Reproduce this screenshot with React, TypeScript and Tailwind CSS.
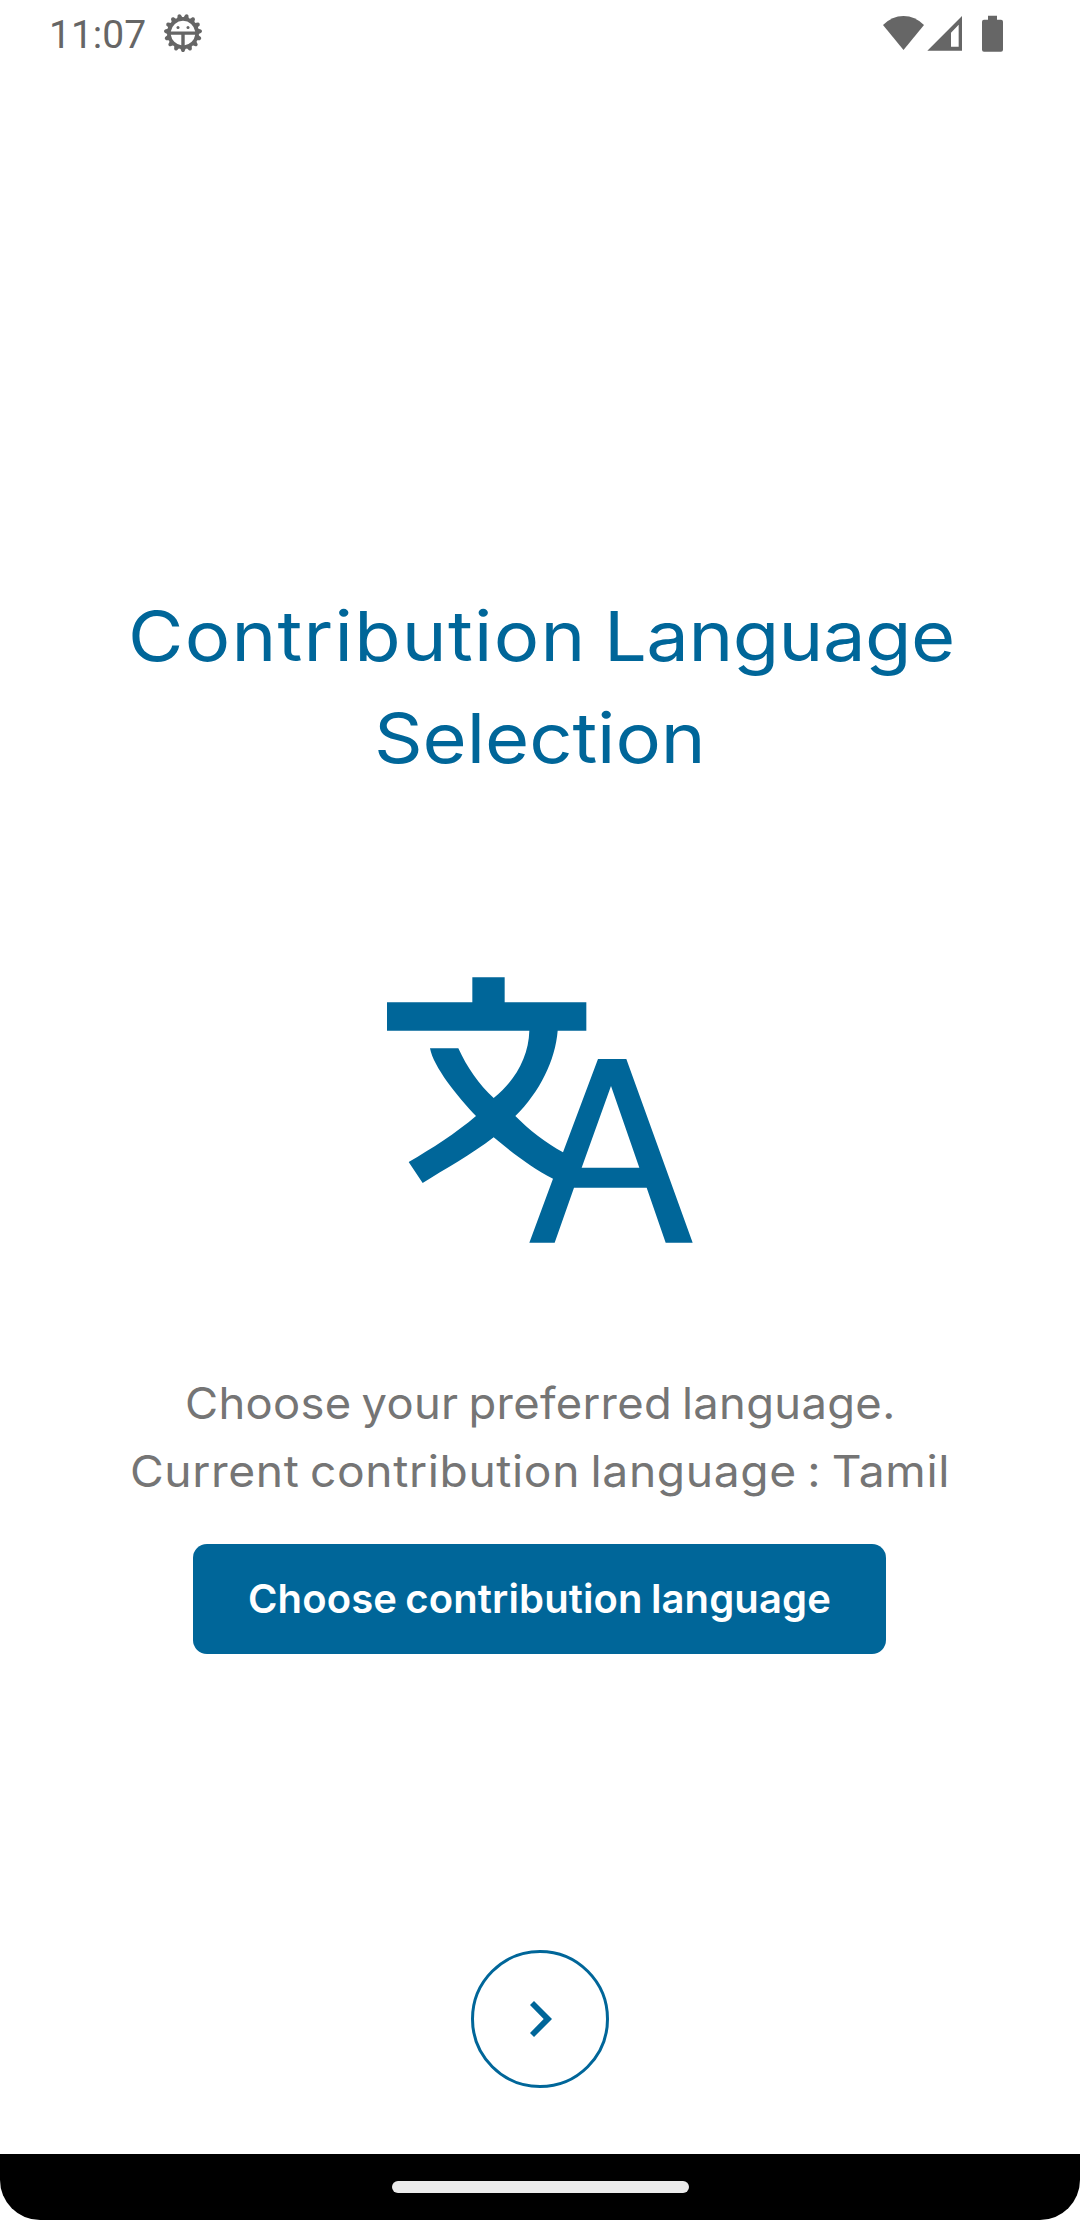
import type { ReactNode } from "react";

const TEETH = Array.from({ length: 15 }, (_, i) => i * 24);

function DebugIcon() {
  return (
    <svg className="h-10 w-10 text-[#666666]" viewBox="-20 -20 40 40" fill="currentColor">
      {TEETH.map((angle) => (
        <path key={angle} transform={`rotate(${angle})`} d="M-3.2 14 L-1.6 18.2 Q0 20 1.6 18.2 L3.2 14 Z" />
      ))}
      <path
        fillRule="evenodd"
        d="M0 -16 A16 16 0 1 1 0 16 A16 16 0 1 1 0 -16 Z M-12.2 -1.4 H12.2 A12.3 12.3 0 0 0 -12.2 -1.4 Z M-12.2 1.8 A12.3 12.3 0 0 0 -1.7 12.2 V1.8 Z M12.2 1.8 A12.3 12.3 0 0 1 1.7 12.2 V1.8 Z"
      />
      <circle cx="-5" cy="-5.6" r="1.5" />
      <circle cx="5" cy="-5.6" r="1.5" />
    </svg>
  );
}

function StatusBar() {
  return (
    <header className="flex h-[69px] shrink-0 items-center pl-[49px] pr-[77px] font-['Roboto',sans-serif] text-[39px] text-[#666666]">
      <span className="pt-px leading-[69px]">11:07</span>
      <div className="-mt-[3px] ml-[17px]">
        <DebugIcon />
      </div>
      <div className="-mt-[3px] ml-auto flex items-start">
        <svg className="mr-[3px] h-[37px] w-[41px]" viewBox="69 43 123 111" fill="currentColor">
          <path d="M69 73 Q96 46 130.500 46 Q165 46 192 73 L130.500 148 Z" />
        </svg>
        <svg className="mr-5 h-[37px] w-[35px]" viewBox="201 43 105 111" fill="currentColor">
          <path fillRule="evenodd" d="M202 150 L306 46 V150 Z M273 96 V138 H296 V72 Z" />
        </svg>
        <svg className="h-[37px] w-[21px]" viewBox="366 43 63 111" fill="currentColor">
          <path d="M384 45 H411 V57 H423 Q429 57 429 63 V147 Q429 153 423 153 H372 Q366 153 366 147 V63 Q366 57 372 57 H384 Z" />
        </svg>
      </div>
    </header>
  );
}

function TranslateIcon() {
  return (
    <svg className="h-[300px] w-[340px]" viewBox="0 0 1020 900" fill="#006699">
      <path
        fillRule="evenodd"
        d="M307 52 H404 V127 H649 V212 H563 C556 300 510 395 436 468 C476 509 530 550 579 577 L684 297 H769 L968 848 H887 L830 683 H612 L554 848 H478 L549 656 C488 625 425 577 371 532 C303 585 225 627 158 669 L116 606 C185 566 257 520 318 468 C262 410 190 320 180 265 H265 C290 320 327 375 371 414 C436 362 476 290 478 212 H51 V127 H307 Z M723 378 L635 623 H808 Z"
      />
    </svg>
  );
}

function PrimaryButton({ children }: { children: ReactNode }) {
  return (
    <button className="h-[110px] w-[693px] whitespace-nowrap rounded-[14px] bg-[#006699] text-[40px] font-semibold tracking-[0.13px] text-white [word-spacing:-2px]">
      {children}
    </button>
  );
}

export default function App() {
  return (
    <div className="flex h-[2220px] w-[1080px] flex-col overflow-hidden bg-white font-['Inter',sans-serif]">
      <StatusBar />
      <main className="flex h-[2085px] flex-col items-center pt-[516px]">
        <h1 className="w-full whitespace-nowrap text-[69px] leading-[102px] text-[#006699]">
          <span className="ml-[127.6px] block w-max origin-left scale-x-110 [word-spacing:-4.6px]">
            <span className="tracking-[1.12px]">Contribution </span>
            <span className="tracking-[-0.53px]">Language</span>
          </span>
          <span className="ml-[373.7px] block w-max origin-left scale-x-110 tracking-[-0.1px]">Selection</span>
        </h1>
        <div className="mt-[171px]">
          <TranslateIcon />
        </div>
        <p className="mt-[109px] w-full whitespace-nowrap text-[44px] leading-[68px] text-[#757575]">
          <span className="ml-[185.4px] block w-max origin-left scale-x-103 tracking-[0.32px] [word-spacing:-3px]">
            Choose your preferred language.
          </span>
          <span className="ml-[130.4px] block w-max origin-left scale-x-105 tracking-[0.59px] [word-spacing:-3px]">
            Current contribution language : Tamil
          </span>
        </p>
        <div className="-ml-px mt-[39px]">
          <PrimaryButton>Choose contribution language</PrimaryButton>
        </div>
        <button className="mt-[296px] flex size-[138px] items-center justify-center rounded-full border-[3px] border-[#006699]">
          <svg className="ml-[2px] h-9 w-[22px]" viewBox="0 0 22 36" fill="#006699">
            <path d="M4 0 L22 18 L4 36 L0 32 L13.700 18 L0 4 Z" />
          </svg>
        </button>
      </main>
      <footer className="flex h-[66px] shrink-0 justify-center rounded-b-[40px] bg-black pt-[27px]">
        <div className="h-3 w-[297px] rounded-full bg-[#ebebeb]" />
      </footer>
    </div>
  );
}
